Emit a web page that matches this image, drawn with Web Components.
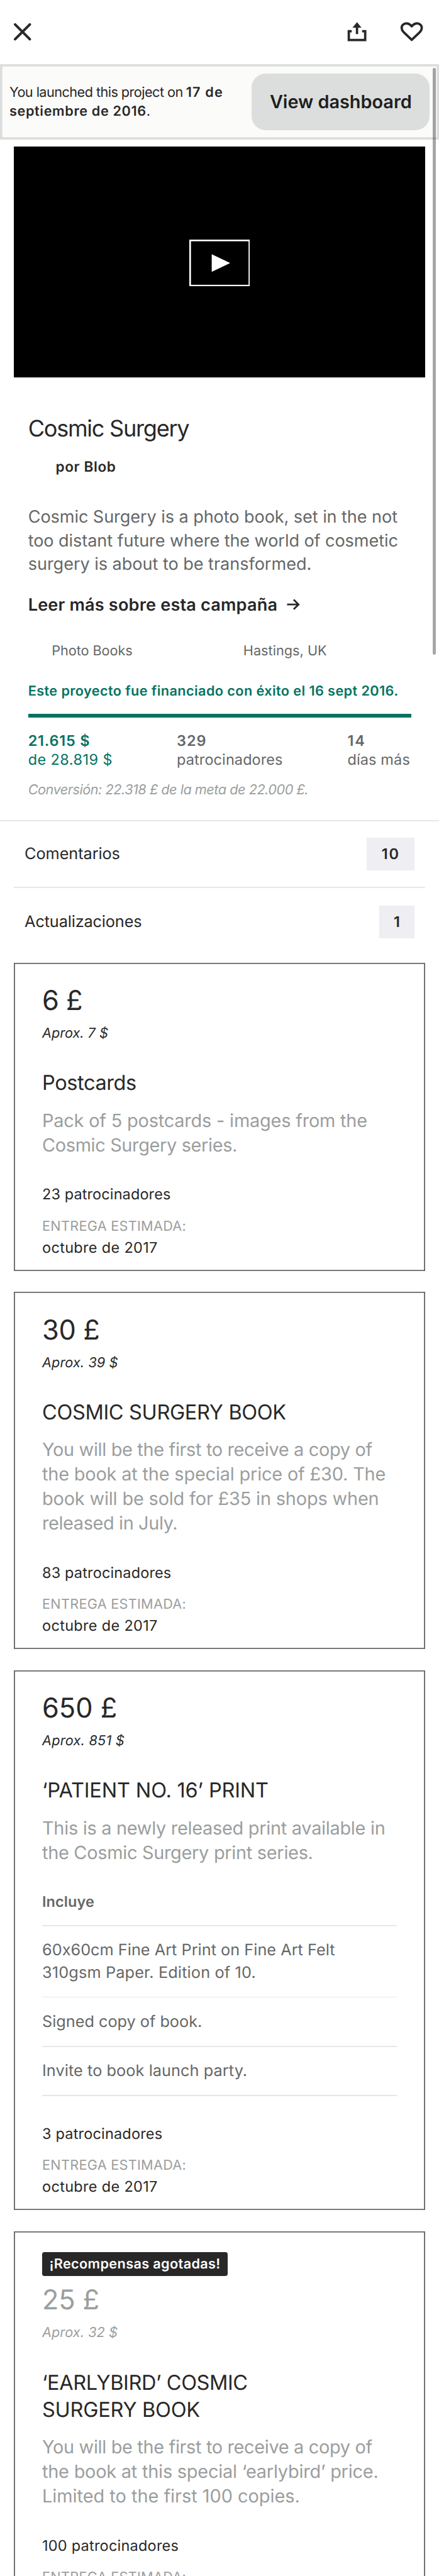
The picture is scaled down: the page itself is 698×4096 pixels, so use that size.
<!DOCTYPE html>
<html lang="es">
<head>
<meta charset="utf-8">
<title>Cosmic Surgery</title>
<style>
  /* 1rem = ten design pixels */
  html { font-size: 9.309px; background: #fff; }
  body {
    margin: 0; height: 4096px; overflow: hidden; position: relative;
    font-family: Inter, "Liberation Sans", sans-serif; color: #282828;
    font-feature-settings: "calt" 0; text-rendering: geometricPrecision;
  }
  .gray { color: #656868; }
  .light { color: #9b9e9e; }
  .green { color: #037362; }
</style>
</head>
<body>
<project-page>
  <top-bar></top-bar>
  <launch-banner>
    <text-line size="24" gap="56.7" w="296">You launched this project on</text-line>
    <text-line slot="date" size="24" gap="56.7" w="60.3" weight="600">17 de</text-line>
    <text-line slot="rest" size="24" gap="32.2" w="232.5" weight="600">septiembre de 2016</text-line>
    <text-line slot="dot" size="24" gap="32.2">.</text-line>
    <text-line slot="action" plain size="32" w="241.5" weight="600">View dashboard</text-line>
  </launch-banner>
  <video-player></video-player>
  <project-info>
    <text-line size="40" gap="98.7" w="273.6">Cosmic Surgery</text-line>
    <text-line size="25" gap="60.6" w="101.4" weight="600" indent="47">por Blob</text-line>
    <text-line class="gray" size="30" gap="86.4" w="630">Cosmic Surgery is a photo book, set in the not</text-line>
    <text-line class="gray" size="30" gap="40.2" w="631.4">too distant future where the world of cosmetic</text-line>
    <text-line class="gray" size="30" gap="40.2" w="481">surgery is about to be transformed.</text-line>
    <more-link><text-line size="30" gap="69.6" w="423" weight="600">Leer más sobre esta campaña</text-line></more-link>
    <meta-row>
      <text-line class="gray" size="24" gap="77.7" w="136.3">Photo Books</text-line>
      <text-line class="gray" size="24" gap="77.7" w="141.1">Hastings, UK</text-line>
    </meta-row>
    <text-line class="green" size="24" gap="68.9" w="630" weight="600">Este proyecto fue financiado con éxito el 16 sept 2016.</text-line>
    <progress-bar></progress-bar>
    <stats-row>
      <stat-item>
        <text-line class="green" size="26" gap="49.2" w="103.8" weight="600">21.615 $</text-line>
        <text-line class="green" size="26" gap="31.8" w="141.5">de 28.819 $</text-line>
      </stat-item>
      <stat-item>
        <text-line class="gray" size="26" gap="49.2" w="47.8" weight="600">329</text-line>
        <text-line class="gray" size="26" gap="31.8" w="179.4">patrocinadores</text-line>
      </stat-item>
      <stat-item>
        <text-line class="gray" size="26" gap="49.2" w="27.8" weight="600">14</text-line>
        <text-line class="gray" size="26" gap="31.8" w="105.2">días más</text-line>
      </stat-item>
    </stats-row>
    <text-line class="light" size="24" gap="52" w="475.4" italic>Conversión: 22.318 £ de la meta de 22.000 £.</text-line>
  </project-info>
  <nav-row first>
    <text-line plain size="28" w="161.7">Comentarios</text-line>
    <text-line slot="count" plain size="26" w="27.7" weight="600">10</text-line>
  </nav-row>
  <nav-row>
    <text-line plain size="28" w="200">Actualizaciones</text-line>
    <text-line slot="count" plain size="26" weight="600">1</text-line>
  </nav-row>

  <reward-card>
    <text-line size="48" gap="82" w="65.5">6 £</text-line>
    <text-line size="24" gap="47.2" w="113.8" italic>Aprox. 7 $</text-line>
    <text-line size="36" gap="88" w="158">Postcards</text-line>
    <text-line class="light" size="32" gap="63" w="552.4">Pack of 5 postcards - images from the</text-line>
    <text-line class="light" size="32" gap="42" w="331">Cosmic Surgery series.</text-line>
    <text-line size="26" gap="82" w="218">23 patrocinadores</text-line>
    <text-line class="light" size="24" gap="54.2" w="243.4">ENTREGA ESTIMADA:</text-line>
    <text-line size="26" gap="36.8" w="195.6">octubre de 2017</text-line>
  </reward-card>

  <reward-card>
    <text-line size="48" gap="82" w="94.7">30 £</text-line>
    <text-line size="24" gap="47.2" w="130.6" italic>Aprox. 39 $</text-line>
    <text-line size="36" gap="88" w="415">COSMIC SURGERY BOOK</text-line>
    <text-line class="light" size="32" gap="63" w="564.4">You will be the first to receive a copy of</text-line>
    <text-line class="light" size="32" gap="42" w="586">the book at the special price of £30. The</text-line>
    <text-line class="light" size="32" gap="42" w="571">book will be sold for £35 in shops when</text-line>
    <text-line class="light" size="32" gap="42" w="228">released in July.</text-line>
    <text-line size="26" gap="82" w="219">83 patrocinadores</text-line>
    <text-line class="light" size="24" gap="54.2" w="243.4">ENTREGA ESTIMADA:</text-line>
    <text-line size="26" gap="36.8" w="195.6">octubre de 2017</text-line>
  </reward-card>

  <reward-card>
    <text-line size="48" gap="82" w="124.3">650 £</text-line>
    <text-line size="24" gap="47.2" w="141.6" italic>Aprox. 851 $</text-line>
    <text-line size="36" gap="88" w="383.6">‘PATIENT NO. 16’ PRINT</text-line>
    <text-line class="light" size="32" gap="63" w="583">This is a newly released print available in</text-line>
    <text-line class="light" size="32" gap="42" w="461.5">the Cosmic Surgery print series.</text-line>
    <include-item><text-line class="gray" size="26" gap="81.7" w="87" weight="600">Incluye</text-line></include-item>
    <include-item>
      <text-line class="gray" size="28" gap="51.3" w="501.8">60x60cm Fine Art Print on Fine Art Felt</text-line>
      <text-line class="gray" size="28" gap="38" w="362.5">310gsm Paper. Edition of 10.</text-line>
    </include-item>
    <include-item><text-line class="gray" size="28" gap="51" w="270.7">Signed copy of book.</text-line></include-item>
    <include-item><text-line class="gray" size="28" gap="51" w="346.8">Invite to book launch party.</text-line></include-item>
    <text-line size="26" gap="73" w="203.8">3 patrocinadores</text-line>
    <text-line class="light" size="24" gap="54.2" w="243.4">ENTREGA ESTIMADA:</text-line>
    <text-line size="26" gap="36.8" w="195.6">octubre de 2017</text-line>
  </reward-card>

  <reward-card>
    <sold-badge><text-line plain size="24" w="290" weight="600">¡Recompensas agotadas!</text-line></sold-badge>
    <text-line class="light" size="48" gap="57.5" w="92.8">25 £</text-line>
    <text-line class="light" size="24" gap="47.3" w="130" italic>Aprox. 32 $</text-line>
    <text-line size="36" gap="89" w="347.3">‘EARLYBIRD’ COSMIC</text-line>
    <text-line size="36" gap="46" w="267.8">SURGERY BOOK</text-line>
    <text-line class="light" size="32" gap="63" w="564.4">You will be the first to receive a copy of</text-line>
    <text-line class="light" size="32" gap="42" w="573">the book at this special ‘earlybird’ price.</text-line>
    <text-line class="light" size="32" gap="42" w="436.7">Limited to the first 100 copies.</text-line>
    <text-line size="26" gap="82" w="231.5">100 patrocinadores</text-line>
    <text-line class="light" size="24" gap="54.2" w="243.4">ENTREGA ESTIMADA:</text-line>
    <text-line size="26" gap="36.8" w="195.6">octubre de 2017</text-line>
  </reward-card>
</project-page>

<script>
  const define = (name, html, init) => customElements.define(name, class extends HTMLElement {
    constructor() {
      super();
      const t = document.createElement('template');
      t.innerHTML = html;
      this.attachShadow({ mode: 'open' }).append(t.content.cloneNode(true));
    }
    connectedCallback() { if (init) init(this); }
  });

  /* One line of type. "gap" is the distance from the previous baseline, so the
     box ends on its own baseline; "w" is the drawn width the tracking must give. */
  const REM = 9.309, FIT = 0.97;
  const ctx = document.createElement('canvas').getContext('2d');
  define('text-line', `<style>
    :host { display: block; white-space: nowrap; line-height: 1; flex: none;
      font-size: calc(var(--size) * .097rem); font-weight: var(--weight, 400);
      margin: calc(var(--gap) * .1rem - var(--base)) 0 calc(var(--base) - 1em) calc(var(--indent, 0) * .1rem); }
    :host([plain]) { margin: calc(.8637em - var(--base)) 0 calc(var(--base) - .8637em); }
    :host([italic]) { font-style: italic; }
    </style><slot></slot>`, el => {
    for (const a of ['size', 'gap', 'weight', 'indent'])
      if (el.hasAttribute(a)) el.style.setProperty('--' + a, el.getAttribute(a));
    const px = el.getAttribute('size') / 10 * REM * FIT;
    /* the browser rounds ascent and descent to whole pixels before it centres the line */
    const up = Math.round(px * .96875), down = Math.round(px * .2412);
    el.style.setProperty('--base', up + Math.floor((px - up - down) / 2) + 'px');
    const w = parseFloat(el.getAttribute('w'));
    const s = el.textContent;
    if (!w || s.length < 2) return;
    ctx.font = `${el.hasAttribute('italic') ? 'italic ' : ''}${el.getAttribute('weight') || 400} ${px}px Inter, "Liberation Sans", sans-serif`;
    ctx.textRendering = 'geometricPrecision';
    const m = ctx.measureText(s);
    const ink = m.actualBoundingBoxLeft + m.actualBoundingBoxRight;
    el.style.letterSpacing = ((w / 10 * REM - ink) / (s.length - 1)).toFixed(3) + 'px';
  });

  define('project-page', `<style>
    :host { display: flex; flex-direction: column; width: 75rem; position: relative; }
    .thumb { position: absolute; left: 73.9rem; top: 11.6rem; width: .5rem; height: 100.2rem;
      border-radius: .25rem; background: rgba(0,0,0,.35); }
    </style><slot></slot><div class="thumb"></div>`);

  define('top-bar', `<style>
    :host { display: flex; height: 11rem; box-sizing: border-box; padding: 3.4rem 2.7rem 0 1.8rem; }
    svg { width: 4rem; height: 4rem; display: block; overflow: visible; fill: none; stroke: #282828; stroke-width: 4; }
    .share { margin-left: auto; margin-right: 5.3rem; }
    </style>
    <svg viewBox="0 0 40 40"><path d="M7.5 7.4 32.7 32.6M32.700 7.400 7.500 32.600" stroke-width="4.400" stroke-linecap="round"/></svg>
    <svg class="share" viewBox="0 0 40 40"><path d="M11 19H6V34H34V19H28.700M20 24V10"/><path d="M20 3.500 27.700 13H12.300z" fill="#282828" stroke="none"/></svg>
    <svg viewBox="0 0 40 40"><path d="M20 33.800 6.200 20.600C1.800 16.200 2 10.800 5 8 9.200 4.200 15.800 4.800 20 10.600 24.200 4.800 30.800 4.200 35 8c3 2.800 3.200 8.200-1.200 12.600z" stroke-linejoin="round"/></svg>`);

  define('launch-banner', `<style>
    :host { display: flex; justify-content: space-between; height: 12.8rem; box-sizing: border-box; padding: 0 1.6rem;
      background: #fbfbf9; box-shadow: inset 0 0 0 .4rem #dcdedd; }
    .row { display: flex; }
    ::slotted([slot=date]) { margin-left: .55rem; }
    .btn { width: 30.4rem; height: 9.6rem; margin-top: 1.6rem; border-radius: 2.4rem; background: #dcdedd;
      display: flex; align-items: center; justify-content: center; color: #1f1f1f; }
    </style>
    <div><div class="row"><slot></slot><slot name="date"></slot></div>
    <div class="row"><slot name="rest"></slot><slot name="dot"></slot></div></div>
    <div class="btn"><slot name="action"></slot></div>`);

  define('video-player', `<style>
    :host { display: flex; justify-content: center; margin: 1.2rem 2.4rem 0; height: 39.5rem;
      background: #000; border-bottom: 2px solid #e6e6e6; }
    svg { width: 10.4rem; height: 8rem; margin-top: 15.9rem; display: block; }
    </style><svg viewBox="0 0 104 80"><rect x="1.4" y="1.4" width="101.2" height="77.2" fill="none" stroke="#fff" stroke-width="2.8"/><path d="M38.300 25v30l31.500-15z" fill="#fff"/></svg>`);

  define('project-info', `<style>
    :host { display: flex; flex-direction: column; padding: 0 4.8rem; margin-bottom: 4.2rem; }
    </style><slot></slot>`);

  define('more-link', `<style>
    :host { display: flex; }
    svg { width: 2.4rem; height: 2rem; margin-left: 1.6rem; align-self: flex-end; fill: none; stroke: #282828; stroke-width: 3; }
    </style><slot></slot><svg viewBox="0 0 24 20"><path d="M.5 9.900H20.500M11.800 1.700l8.300 8.200-8.300 8.200"/></svg>`);

  define('meta-row', `<style>
    :host { display: grid; grid-template-columns: 32.7rem auto; padding-left: 4.050rem; }
    </style><slot></slot>`);

  define('progress-bar', `<style>
    :host { display: block; height: .6rem; margin-top: 2.980rem; background: #037362; }
    </style>`);

  define('stats-row', `<style>
    :host { display: grid; grid-template-columns: 25.4rem 29.150rem auto; }
    </style><slot></slot>`);

  define('stat-item', `<style>:host { display: flex; flex-direction: column; }</style><slot></slot>`);

  define('nav-row', `<style>
    :host { display: flex; align-items: center; justify-content: space-between; height: 11.6rem;
      margin: 0 2.4rem 1.2rem; padding: 0 1.8rem; border-top: .2rem solid transparent;
      background: linear-gradient(#e6e7e7, #e6e7e7) top / 100% 2px no-repeat border-box; }
    :host([first]) { height: 11.2rem; margin: 0; padding: 0 1.8rem 0 4.2rem; }
    :host([first]) .count { margin-right: 2.4rem; }
    .count { height: 5.6rem; padding: 0 2.500rem; display: flex; align-items: center; background: #eeeef3; }
    :host { border-top-width: 2px; }
    </style><slot></slot><span class="count"><slot name="count"></slot></span>`);

  define('reward-card', `<style>
    :host { display: flex; flex-direction: column; margin: 0 2.4rem 3.6rem; padding: 0 4.8rem 3.1rem;
      box-shadow: inset 0 0 0 .2rem #656868; }
    </style><slot></slot>`);

  define('include-item', `<style>
    :host { display: flex; flex-direction: column; }
    i { display: block; height: .2rem; margin-top: 3.1rem; background: #e6e7e7; }
    </style><slot></slot><i></i>`);

  define('sold-badge', `<style>
    :host { display: flex; align-items: center; align-self: flex-start; justify-content: center; width: 31.7rem; height: 4.1rem;
      margin-top: 3.6rem; border-radius: .4rem; background: #282828; color: #fff; }
    </style><slot></slot>`);
</script>
</body>
</html>
